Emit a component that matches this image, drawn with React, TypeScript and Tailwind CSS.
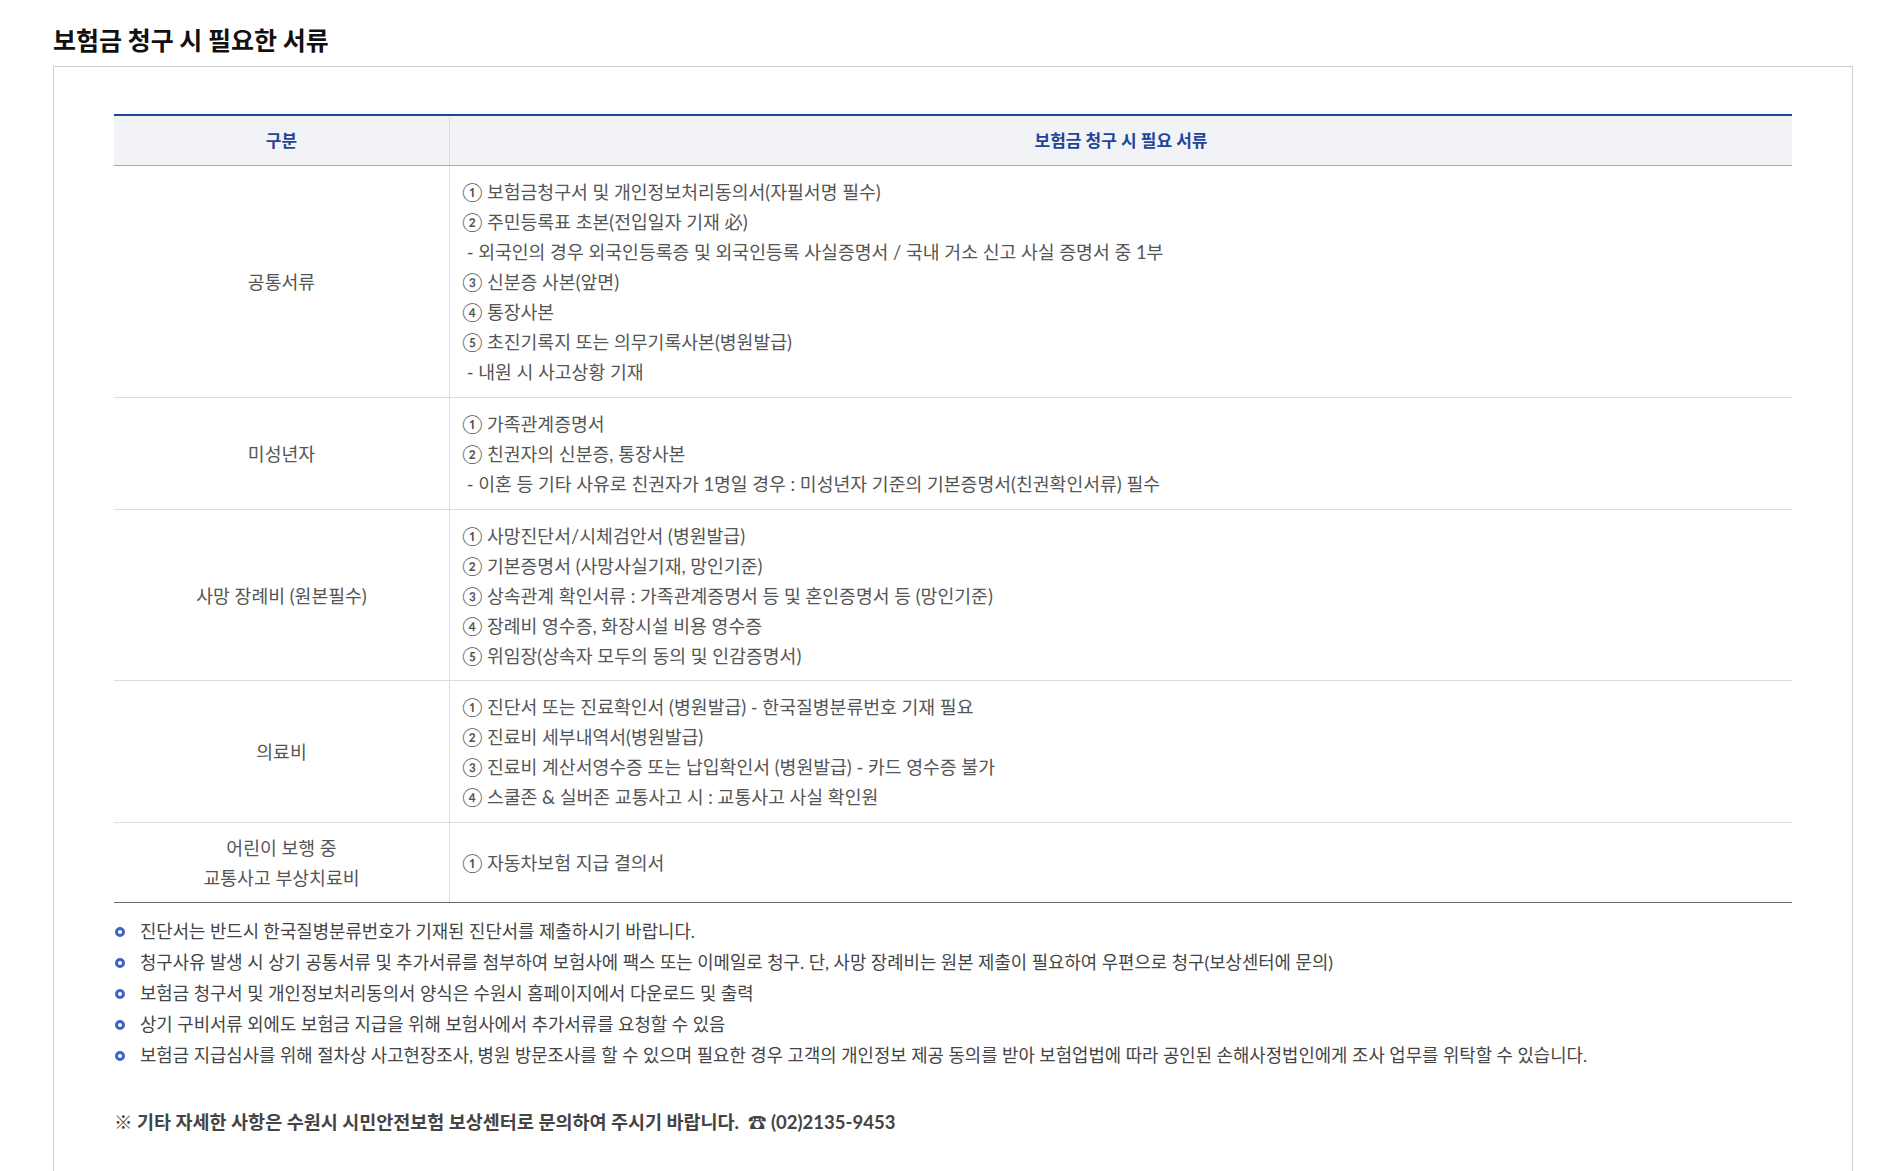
import React from "react";

const rows: { label: React.ReactNode; items: string[]; py: string }[] = [
  {
    label: "공통서류",
    py: "pt-[11px] pb-[9.5px]",
    items: [
      "① 보험금청구서 및 개인정보처리동의서(자필서명 필수)",
      "② 주민등록표 초본(전입일자 기재 必)",
      " - 외국인의 경우 외국인등록증 및 외국인등록 사실증명서 / 국내 거소 신고 사실 증명서 중 1부",
      "③ 신분증 사본(앞면)",
      "④ 통장사본",
      "⑤ 초진기록지 또는 의무기록사본(병원발급)",
      " - 내원 시 사고상황 기재",
    ],
  },
  {
    label: "미성년자",
    py: "pt-[11px] pb-[10px]",
    items: [
      "① 가족관계증명서",
      "② 친권자의 신분증, 통장사본",
      " - 이혼 등 기타 사유로 친권자가 1명일 경우 : 미성년자 기준의 기본증명서(친권확인서류) 필수",
    ],
  },
  {
    label: "사망 장례비 (원본필수)",
    py: "pt-[11px] pb-[9.5px]",
    items: [
      "① 사망진단서/시체검안서 (병원발급)",
      "② 기본증명서 (사망사실기재, 망인기준)",
      "③ 상속관계 확인서류 : 가족관계증명서 등 및 혼인증명서 등 (망인기준)",
      "④ 장례비 영수증, 화장시설 비용 영수증",
      "⑤ 위임장(상속자 모두의 동의 및 인감증명서)",
    ],
  },
  {
    label: "의료비",
    py: "pt-[11px] pb-[10px]",
    items: [
      "① 진단서 또는 진료확인서 (병원발급) - 한국질병분류번호 기재 필요",
      "② 진료비 세부내역서(병원발급)",
      "③ 진료비 계산서영수증 또는 납입확인서 (병원발급) - 카드 영수증 불가",
      "④ 스쿨존 & 실버존 교통사고 시 : 교통사고 사실 확인원",
    ],
  },
  {
    label: (
      <>
        어린이 보행 중
        <br />
        교통사고 부상치료비
      </>
    ),
    py: "pt-[10px] pb-[9px]",
    items: ["① 자동차보험 지급 결의서"],
  },
];

const notes = [
  "진단서는 반드시 한국질병분류번호가 기재된 진단서를 제출하시기 바랍니다.",
  "청구사유 발생 시 상기 공통서류 및 추가서류를 첨부하여 보험사에 팩스 또는 이메일로 청구. 단, 사망 장례비는 원본 제출이 필요하여 우편으로 청구(보상센터에 문의)",
  "보험금 청구서 및 개인정보처리동의서 양식은 수원시 홈페이지에서 다운로드 및 출력",
  "상기 구비서류 외에도 보험금 지급을 위해 보험사에서 추가서류를 요청할 수 있음",
  "보험금 지급심사를 위해 절차상 사고현장조사, 병원 방문조사를 할 수 있으며 필요한 경우 고객의 개인정보 제공 동의를 받아 보험업법에 따라 공인된 손해사정법인에게 조사 업무를 위탁할 수 있습니다.",
];

export default function App() {
  return (
    <div className="min-h-screen bg-white font-['Lato','Noto_Sans_CJK_KR',sans-serif]">
      <div className="pl-[53px] pt-[22px]">
        <h2 className="mb-[10px] font-['Noto_Sans_CJK_KR',sans-serif] text-[25px] font-bold leading-[34px] text-[#111]">
          보험금 청구 시 필요한 서류
        </h2>
        <div className="w-[1800px] border border-[#cfcfcf] px-[60px] pb-[80px] pt-[47px]">
          <div className="border-t-2 border-[#1e4799]">
            <div className="grid h-[50px] grid-cols-[335px_1fr] border-b border-[#aaaaaa] bg-[#f2f3f7] pt-[1px] text-[17px] font-bold text-[#1f4597]">
              <div className="flex items-center justify-center">구분</div>
              <div className="flex items-center justify-center border-l border-[#dcdcdc]">
                보험금 청구 시 필요 서류
              </div>
            </div>
            {rows.map((r, i) => (
              <div
                key={i}
                className={`grid grid-cols-[335px_1fr] text-[18.3px] leading-[30px] text-[#555] ${
                  i === rows.length - 1
                    ? "border-b border-[#666a75]"
                    : "border-b border-[#dcdcdc]"
                }`}
              >
                <div className={`flex items-center justify-center text-center ${r.py}`}>
                  <div>{r.label}</div>
                </div>
                <div className={`border-l border-[#dcdcdc] pl-[12px] ${r.py} flex flex-col justify-center`}>
                  {r.items.map((t, j) => (
                    <div key={j} className="whitespace-pre">
                      {t}
                    </div>
                  ))}
                </div>
              </div>
            ))}
          </div>

          <ul className="mt-[13px] text-[17.8px] leading-[31px] text-[#444]">
            {notes.map((n, i) => (
              <li key={i} className="flex items-center">
                <span className="ml-[1px] mr-[15px] box-border h-[10px] w-[10px] shrink-0 rounded-full border-[3px] border-[#3d63c7]" />
                <span>{n}</span>
              </li>
            ))}
          </ul>

          <p className="mt-[36px] text-[18.5px] font-bold leading-[30px] text-[#444]">
            ※ 기타 자세한 사항은 수원시 시민안전보험 보상센터로 문의하여 주시기 바랍니다.&nbsp; ☎ (02)2135-9453
          </p>
        </div>
      </div>
    </div>
  );
}
